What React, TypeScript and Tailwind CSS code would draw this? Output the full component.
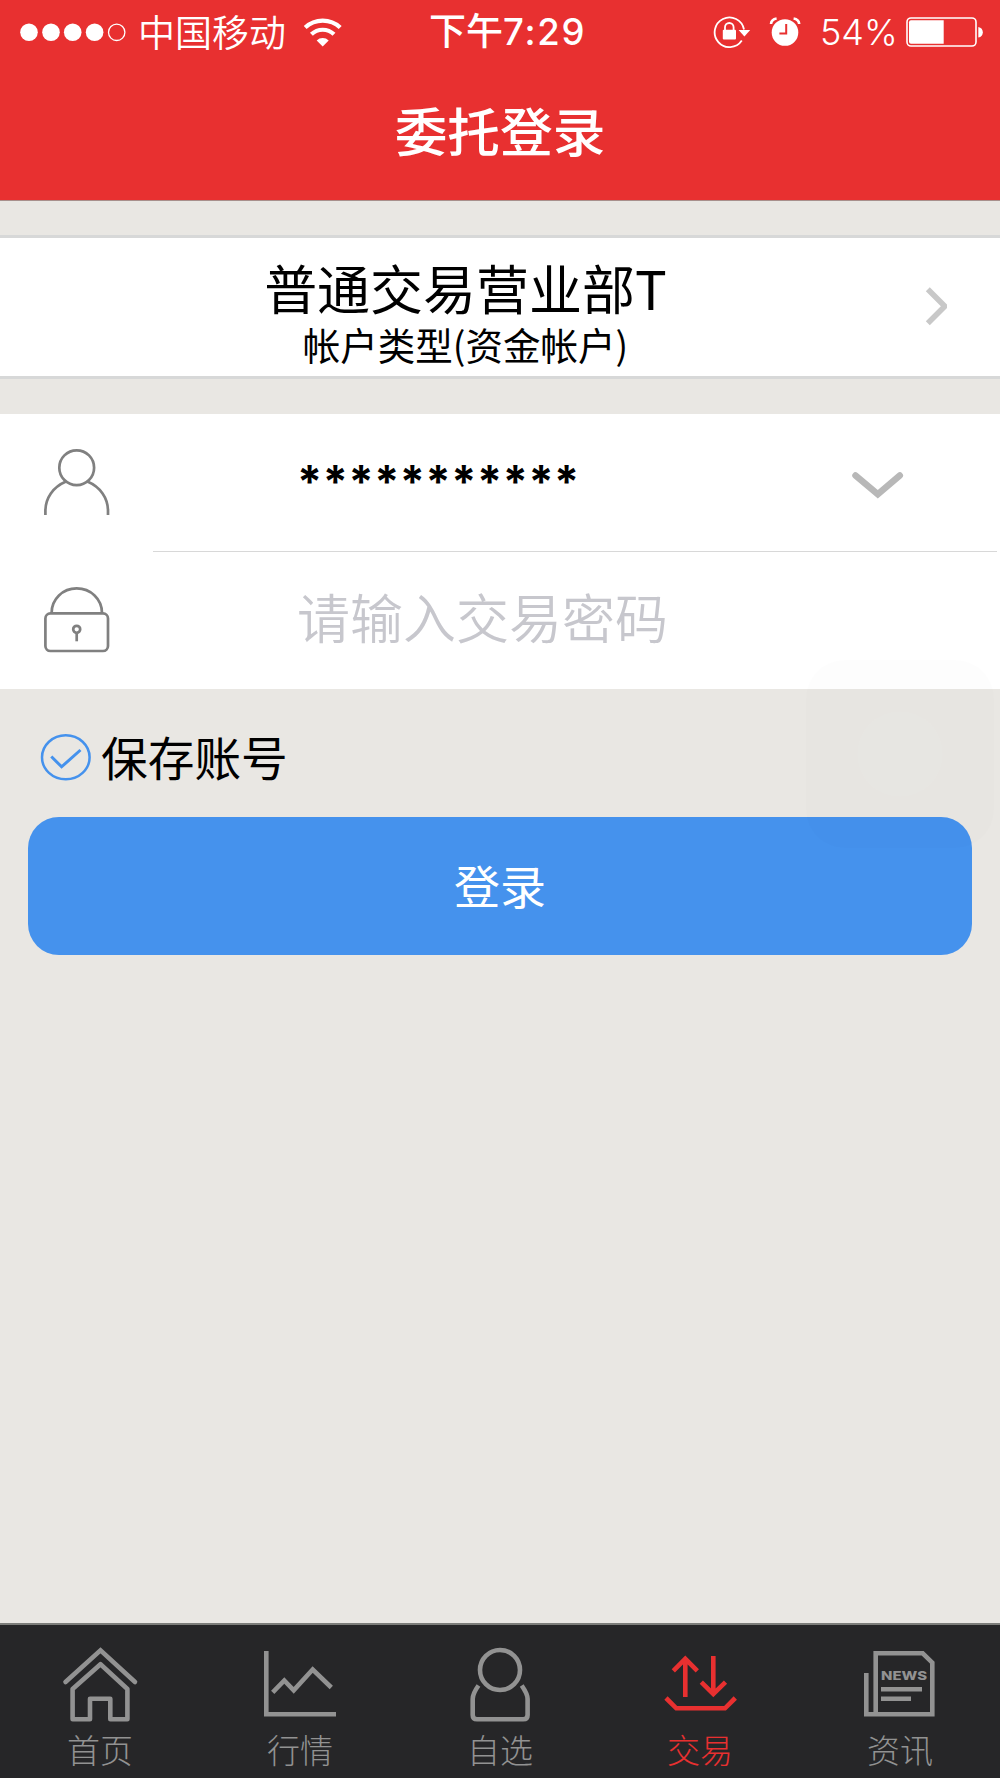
import type { ReactNode } from "react";
import clsx from "clsx";

type Tab = {
  label: string;
  icon: ReactNode;
  active?: boolean;
};

function StatusBar() {
  return (
    <div className="flex h-16 items-center pl-5 text-white">
      <svg className="h-5 w-[107px] shrink-0" viewBox="0 0 107 20" fill="currentColor">
        <circle cx="9" cy="10.3" r="8.8" />
        <circle cx="31" cy="10.3" r="8.8" />
        <circle cx="52.7" cy="10.3" r="8.8" />
        <circle cx="74.6" cy="10.3" r="8.8" />
        <circle cx="96.7" cy="10.3" r="8.2" fill="none" stroke="currentColor" strokeWidth="1.3" />
      </svg>
      <span className="mb-[3px] ml-[11px] w-[149px] shrink-0 text-[37px] leading-[60px] font-[350] whitespace-nowrap">
        中国移动
      </span>
      <svg className="ml-[15px] h-8 w-10 shrink-0" viewBox="302 15 40 32" fill="none" stroke="currentColor">
        <path d="M305.2 26.5a25.5 25.5 0 0 1 35 0" strokeWidth="4.2" />
        <path d="M311.4 33.3a16.3 16.3 0 0 1 22.6 0" strokeWidth="4.2" />
        <path d="M322.7 45.5l-6-6a8.6 8.6 0 0 1 12 0z" fill="currentColor" stroke="none" />
      </svg>
      <span className="mb-1.5 ml-[87px] flex items-baseline font-medium whitespace-nowrap">
        <span className="text-[37px] leading-[60px]">下午</span>
        <span className="font-['Inter'] text-[36.5px] leading-none tracking-[1.8px]">7:29</span>
      </span>
      <div className="ml-auto flex items-center pr-[15px]">
        <svg className="h-8 w-[38px]" viewBox="713 16 38 32" fill="none" stroke="currentColor">
          <path d="M741.8 40.5A14.8 14.8 0 1 1 744 29.5" strokeWidth="1.8" />
          <path d="M738.6 30h11.6l-5.8 6.4z" fill="currentColor" stroke="none" />
          <path d="M725 30.5v-3.2a4.3 4.3 0 0 1 8.6 0v3.2" strokeWidth="1.8" />
          <rect x="722.8" y="29.8" width="13.2" height="9.8" rx="1" fill="currentColor" stroke="none" />
        </svg>
        <svg className="ml-[18px] h-8 w-8" viewBox="769 16 32 32" fill="none">
          <circle cx="785" cy="32.5" r="13.3" fill="currentColor" />
          <path d="M771 24c.2-3 2.2-5 5.6-5.5M799.2 24c-.2-3-2.2-5-5.6-5.5" stroke="currentColor" strokeWidth="2.6" />
          <path d="M786.2 24v9.5h-6.8" stroke="#e83030" strokeWidth="2" />
        </svg>
        <span className="ml-[19px] w-[77px] font-['Inter'] text-[36px] font-[350] whitespace-nowrap">54%</span>
        <svg className="ml-2 h-8 w-20" viewBox="905 16 80 32">
          <rect x="907" y="18" width="69" height="28" rx="4" fill="none" stroke="currentColor" strokeWidth="1.6" />
          <path d="M911 20.3h32.7v23.5H911a2 2 0 0 1-2-2V22.3a2 2 0 0 1 2-2z" fill="currentColor" />
          <path d="M978.3 27c3 .5 4.500 2.600 4.500 5.300s-1.500 4.800-4.500 5.300z" fill="currentColor" />
        </svg>
      </div>
    </div>
  );
}

function UserIcon() {
  return (
    <svg className="mb-0.5 h-[70px] w-[68px]" viewBox="43 447 68 70" fill="none" stroke="#808080" strokeWidth="2.7">
      <circle cx="76.7" cy="467.7" r="17.4" />
      <path d="M45.4 515v-4c0-13 7.6-24 20.6-29.5M108 515v-4c0-13-7.6-24-20.6-29.5" />
    </svg>
  );
}

function LockIcon() {
  return (
    <svg className="mb-px h-[70px] w-[68px]" viewBox="43 585 68 70" fill="none" stroke="#808080" strokeWidth="2.7">
      <rect x="45.4" y="613.4" width="62.6" height="37.6" rx="5" />
      <path d="M51.6 613c0-14 11.2-24.6 25.1-24.6S102 599 102 613" />
      <circle cx="76.7" cy="629.3" r="3.5" />
      <path d="M76.7 633v8.3" />
    </svg>
  );
}

const tabs: Tab[] = [
  {
    label: "首页",
    icon: (
      <>
        <path d="M5.5 37L40.5 5.3L75 37" strokeLinecap="round" />
        <path d="M12.6 74.3V44L40.5 19.2L67.4 44V74.3H50.3V53.7H30V74.3Z" strokeLinejoin="round" />
      </>
    ),
  },
  {
    label: "行情",
    icon: <path d="M6.3 6V69.3H76M12.7 47.3L24.3 35.5L33.7 45.3L52.7 24.5L71.3 42.5" />,
  },
  {
    label: "自选",
    icon: (
      <>
        <circle cx="40" cy="25" r="20" />
        <path d="M18.5 40.5C14.5 46 12.7 50 12.7 54V70Q12.7 74.3 17 74.3H63.3Q67.6 74.3 67.6 70V54C67.6 50 65.5 46 61.7 40.5" />
      </>
    ),
  },
  {
    label: "交易",
    active: true,
    icon: (
      <>
        <path d="M25.3 52V14M13.3 25.8L25.3 13.8L37.3 25.8" />
        <path d="M53.3 11V49M41.3 37.2L53.3 49L65.5 37.2" />
        <path d="M6 53L16.3 63.3H65L75.3 53" />
      </>
    ),
  },
  {
    label: "资讯",
    icon: (
      <>
        <path d="M6.3 28V69.3H72.3V17.7L62.7 8.3H15.7V69.3M21 44.3H62M21 53.7H51" />
        <text
          x="21"
          y="34.5"
          textLength="46"
          lengthAdjust="spacingAndGlyphs"
          fill="currentColor"
          stroke="none"
          className="font-['Inter'] text-[11.5px] font-extrabold"
        >
          NEWS
        </text>
      </>
    ),
  },
];

function TabBar() {
  return (
    <nav className="grid h-[155px] grid-cols-5 border-t-2 border-[#7c7d7a] bg-[#262628]">
      {tabs.map((tab) => (
        <a
          key={tab.label}
          className={clsx("flex flex-col items-center pt-5", tab.active ? "text-[#e83030]" : "text-[#929292]")}
        >
          <svg className="h-20 w-20" viewBox="0 0 80 80" fill="none" stroke="currentColor" strokeWidth="4.6">
            {tab.icon}
          </svg>
          <span className="text-[33px] leading-[48px] font-light">{tab.label}</span>
        </a>
      ))}
    </nav>
  );
}

export default function App() {
  return (
    <div className="relative flex h-[1778px] w-[1000px] flex-col overflow-hidden bg-[#e9e7e3] font-['Noto_Sans_CJK_SC',sans-serif] text-black">
      <header className="h-[201px] border-b border-[#a8908c] bg-[#e83030]">
        <StatusBar />
        <h1 className="text-center text-[52.7px] leading-[130px] font-medium text-white">委托登录</h1>
      </header>

      <button className="mt-[34px] flex h-36 items-center border-y-[3px] border-[#d7d8d8] bg-white">
        <span className="flex w-[931px] flex-col items-center pt-[9px]">
          <span className="text-[53px] leading-[64px]">普通交易营业部T</span>
          <span className="text-[37.5px] leading-[50px]">帐户类型(资金帐户)</span>
        </span>
        <svg className="mb-[3px] -ml-2 h-10 w-6" viewBox="922 286 24 40" fill="none" stroke="#c8c8c8" strokeWidth="5.6">
          <path d="M926.8 289.3l17 17-17 17" />
        </svg>
      </button>

      <section className="mt-[35px] h-[275px] bg-white">
        <div className="flex h-[137px] items-center pl-[43px]">
          <UserIcon />
          <span className="mb-[3px] ml-[186px] w-[555px] font-['Inter'] text-[45px] leading-none font-bold tracking-[0.55px]">
            ***********
          </span>
          <svg className="mt-1.5 h-8 w-[52px]" viewBox="852 470 52 32" fill="none" stroke="#b8b8b8" strokeWidth="6.5">
            <path d="M855.5 475.5l22.3 18.7 22-18.7" strokeLinecap="round" />
          </svg>
        </div>
        <div className="mr-[3px] ml-[153px] h-px bg-[#d8d8d8]" />
        <div className="flex h-[137px] items-center pl-[43px]">
          <LockIcon />
          <span className="mb-[7px] ml-[186px] text-[53px] font-[350] text-[#c7c7cd]">请输入交易密码</span>
        </div>
      </section>

      <label className="flex h-32 items-center pt-2 pl-10">
        <svg className="h-12 w-[52px]" viewBox="40 733 52 48" fill="none" stroke="#4592ed" strokeWidth="2.5">
          <ellipse cx="65.8" cy="757.3" rx="23.8" ry="22" />
          <path d="M51.3 756.5l10.3 10.3 18.9-16.8" strokeWidth="3" />
        </svg>
        <span className="mb-0.5 ml-[9px] text-[46.7px]">保存账号</span>
      </label>

      <button className="mx-7 h-[138px] rounded-[31px] bg-[#4592ed] pb-1 text-[46px] text-white">登录</button>

      <div className="mt-auto">
        <TabBar />
      </div>

      {/* faded assistive touch button floating above the page */}
      <div className="absolute top-[660px] left-[806px] flex size-[188px] items-center justify-center rounded-[38px] bg-black/[0.008]">
        <div className="size-[86px] rounded-full bg-white/[0.04]" />
      </div>
    </div>
  );
}
